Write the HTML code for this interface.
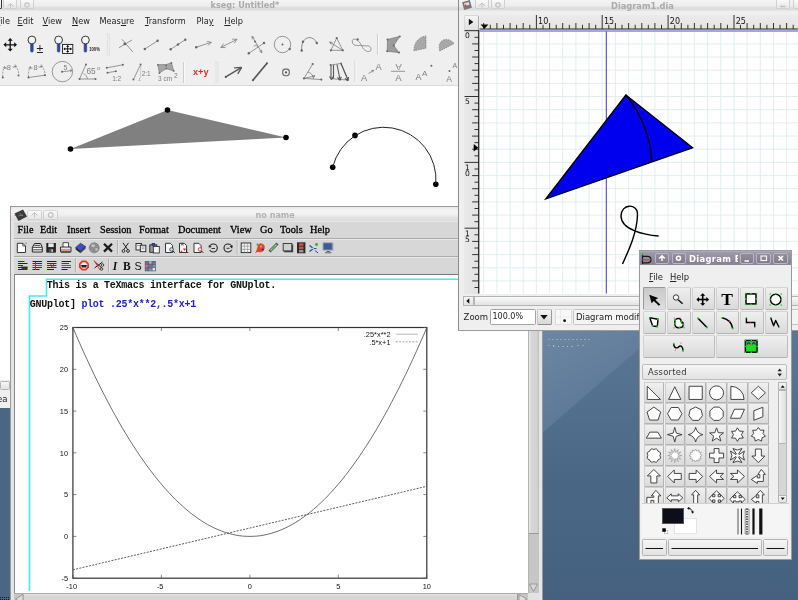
<!DOCTYPE html><html><head><meta charset="utf-8"><title>desktop</title><style>
html,body{margin:0;padding:0;}
body{width:798px;height:600px;overflow:hidden;position:relative;background:#5a7494;font-family:"DejaVu Sans","Liberation Sans",sans-serif;font-size:8.2px;color:#222;}
div,span,svg{position:absolute;box-sizing:border-box;}
.win{background:#efefef;overflow:hidden;will-change:transform;}
.tbar{left:0;right:0;top:0;height:12px;background:linear-gradient(#f4f4f4,#ededed 50%,#dfdfdf 62%,#dcdcdc 80%,#efefef 96%);}
.ttl{font-weight:bold;font-size:8.6px;color:#aaa;white-space:nowrap;line-height:10px;}
.wb{top:0;height:9px;width:14px;border:1px solid #d0d0d0;border-top:none;border-radius:0 0 2px 2px;background:linear-gradient(#fafafa,#e6e6e6);}
.mi{white-space:nowrap;line-height:10px;}
.mi u{text-decoration:underline;text-underline-offset:1px;text-decoration-thickness:0.8px;}
.tm{font-family:"Liberation Serif","DejaVu Serif",serif;}
.mono{font-family:"Liberation Mono","DejaVu Sans Mono",monospace;font-weight:bold;white-space:pre;}
.btn{background:linear-gradient(#f6f6f6,#e2e2e2);border:1px solid #b4b4b4;border-radius:1.5px;}
.tb{background:linear-gradient(#efefef,#dadada);border-color:#d4d4d4 #bcbcbc #b4b4b4 #d0d0d0;}
</style></head><body>
<div style="left:0;top:0;width:798px;height:600px;background:linear-gradient(180deg,#5b7795 0,#5b7795 330px,#54708f 400px,#4b6786 480px,#45617f 600px);"></div>
<svg style="left:0;top:0" width="798" height="600"><defs><linearGradient id="dg" x1="0" y1="0" x2="0.6" y2="1"><stop offset="0" stop-color="#6d87a4"/><stop offset="0.55" stop-color="#627d9b"/><stop offset="1" stop-color="#587492"/></linearGradient></defs><polygon points="540,325 666,325 540,435" fill="url(#dg)"/><path d="M548.5 339.5h42" stroke="#cfc3ae" stroke-width="1" stroke-dasharray="1 3"/><path d="M548.5 345.5h6M553.5 346.5h20" stroke="#cfc3ae" stroke-width="1" stroke-dasharray="1 3.5"/><path d="M577.5 345.5h6" stroke="#cfc3ae" stroke-width="1" stroke-dasharray="1 4"/><rect x="0" y="408" width="10" height="192" fill="#4b6685"/><path d="M0 597.5h10M0 599.5h10" stroke="#101820" stroke-width="1" stroke-dasharray="1 1"/></svg>
<div class="win" id="kseg" style="left:0;top:0;width:458px;height:408px;">
<div class="tbar"></div>
<div class="wb" style="left:-12px;border-color:#333;"></div><div class="wb" style="left:3px"></div><div class="wb" style="left:20px"></div>
<svg style="left:0;top:0" width="40" height="12"><path d="M7.5 6.5l3-3l3 3M10.5 3.8v4" stroke="#c4c4c4" fill="none" stroke-width="1"/><circle cx="27" cy="5" r="2.2" stroke="#c4c4c4" fill="none" stroke-width="1.2"/></svg>
<div class="ttl" style="left:210.6px;top:-0.2px;font-size:8.1px">kseg: Untitled*</div>
<div class="mi" style="left:-3.8px;top:16px;"><u>F</u>ile</div>
<div class="mi" style="left:17.5px;top:16px;"><u>E</u>dit</div>
<div class="mi" style="left:42.6px;top:16px;"><u>V</u>iew</div>
<div class="mi" style="left:72px;top:16px;"><u>N</u>ew</div>
<div class="mi" style="left:99.5px;top:16px;">Meas<u>u</u>re</div>
<div class="mi" style="left:144.9px;top:16px;"><u>T</u>ransform</div>
<div class="mi" style="left:196.5px;top:16px;">Pla<u>y</u></div>
<div class="mi" style="left:224.3px;top:16px;"><u>H</u>elp</div>
<div style="left:0;top:86px;width:458px;height:294px;background:#fff;"></div>
<div style="left:0;top:85px;width:458px;height:1px;background:#d9d9d9;"></div>
<div style="left:0;top:380px;width:458px;height:28px;background:#efefef;"></div>
<div class="btn" style="left:0;top:381px;width:10px;height:9px;"></div>
<div class="mi" style="left:-8.5px;top:394px;font-size:8.6px">Rea</div>
<svg id="kcanvas" style="left:0;top:0" width="458" height="408">
<polygon points="70.5,149 167.5,110 286,137.5" fill="#808080"/>
<circle cx="70.5" cy="149" r="2.8" fill="#000"/>
<circle cx="167.5" cy="110" r="2.8" fill="#000"/>
<circle cx="286" cy="137.5" r="2.8" fill="#000"/>
<circle cx="332.7" cy="167.2" r="2.8" fill="#000"/>
<circle cx="355" cy="135.4" r="2.8" fill="#000"/>
<circle cx="435.8" cy="184.2" r="2.8" fill="#000"/>
<path d="M332.7 167.2A52.4 52.4 0 0 1 435.8 184.2" stroke="#222" stroke-width="1" fill="none"/>
<g font-family="Liberation Sans,DejaVu Sans,sans-serif"><path d="M5.4 44.8H15M10.2 40V49.6" stroke="#111" stroke-width="1.3"/><polygon points="17,44.8 14.2,47.3 14.2,42.3" fill="#111"/><polygon points="3.4,44.8 6.2,42.3 6.2,47.3" fill="#111"/><polygon points="10.2,51.6 12.7,48.8 7.7,48.8" fill="#111"/><polygon points="10.2,38 7.7,40.8 12.7,40.8" fill="#111"/><rect x="30.6" y="43.6" width="2.6" height="8.5" fill="#2e3fd6" stroke="#444" stroke-width="0.6" rx="1"/><circle cx="31.9" cy="40" r="3.9" fill="#f4f4f4" stroke="#222" stroke-width="0.9"/><rect x="57.3" y="43.6" width="2.6" height="8.5" fill="#2e3fd6" stroke="#444" stroke-width="0.6" rx="1"/><circle cx="58.6" cy="40" r="3.9" fill="#f4f4f4" stroke="#222" stroke-width="0.9"/><rect x="84.1" y="43.6" width="2.6" height="8.5" fill="#2e3fd6" stroke="#444" stroke-width="0.6" rx="1"/><circle cx="85.4" cy="40" r="3.9" fill="#f4f4f4" stroke="#222" stroke-width="0.9"/><text x="36.6" y="53" font-size="12.5" fill="#222" text-anchor="start" >±</text><rect x="62.6" y="44.4" width="10.2" height="9" fill="#fff" stroke="#111" stroke-width="0.9"/><path d="M67.7 45.6v6.6M64 48.9h7.4" stroke="#111" stroke-width="1"/><path d="M67.7 45l1.7 1.8h-3.4zM67.7 52.8l1.7-1.8h-3.4zM63.4 48.9l1.8-1.7v3.4zM72 48.9l-1.8-1.7v3.4z" fill="#111"/><text x="89.3" y="51.2" font-size="5" fill="#222" text-anchor="start" font-weight="bold" textLength="10.5" lengthAdjust="spacingAndGlyphs">100%</text><path d="M107.3 33V56M109.3 34V56" stroke="#cfcfcf" stroke-width="1" stroke-dasharray="1 1.3" fill="none"/><path d="M119 47.7L132 40" stroke="#7d7d7d" stroke-width="0.8" fill="none" /><path d="M122 39.3L133 52.2" stroke="#7d7d7d" stroke-width="0.8" fill="none" /><circle cx="124.8" cy="43.9" r="1.4" fill="#666"/><path d="M144.8 49L157.6 40.8" stroke="#7d7d7d" stroke-width="0.8" fill="none" /><circle cx="144.8" cy="49" r="1.2" fill="#666"/><circle cx="157.6" cy="40.8" r="1.2" fill="#666"/><path d="M170.7 49.3L185.3 39.7" stroke="#7d7d7d" stroke-width="0.8" fill="none" /><circle cx="170.7" cy="49.3" r="1.2" fill="#666"/><circle cx="185.3" cy="39.7" r="1.2" fill="#666"/><circle cx="178" cy="44.5" r="1.2" fill="#666"/><path d="M196.2 47.2L211.3 42.3" stroke="#7d7d7d" stroke-width="0.8" fill="none" /><circle cx="196.2" cy="47.2" r="1.2" fill="#666"/><path d="M211.3 42.3L206.87 41.52" stroke="#7d7d7d" stroke-width="0.8" fill="none" /><path d="M211.3 42.3L208.17 45.54" stroke="#7d7d7d" stroke-width="0.8" fill="none" /><path d="M220.8 47.5L237 39.3" stroke="#7d7d7d" stroke-width="0.8" fill="none" /><path d="M237 39.3L232.2 39.2" stroke="#7d7d7d" stroke-width="0.8" fill="none" /><path d="M237 39.3L234.24 43.22" stroke="#7d7d7d" stroke-width="0.8" fill="none" /><path d="M220.8 47.5L225.6 47.6" stroke="#7d7d7d" stroke-width="0.8" fill="none" /><path d="M220.8 47.5L223.56 43.58" stroke="#7d7d7d" stroke-width="0.8" fill="none" /><path d="M248.8 53.3L264 43" stroke="#7d7d7d" stroke-width="0.8" fill="none" /><circle cx="248.8" cy="53.3" r="1.2" fill="#666"/><circle cx="264" cy="43" r="1.2" fill="#666"/><path d="M252 36.3L261.9 52.8" stroke="#7d7d7d" stroke-width="0.8" fill="none" /><path d="M261.9 52.8L261.59 49.82" stroke="#7d7d7d" stroke-width="0.8" fill="none" /><path d="M261.9 52.8L259.41 51.12" stroke="#7d7d7d" stroke-width="0.8" fill="none" /><path d="M252 36.3L252.31 39.28" stroke="#7d7d7d" stroke-width="0.8" fill="none" /><path d="M252 36.3L254.49 37.98" stroke="#7d7d7d" stroke-width="0.8" fill="none" /><circle cx="255" cy="41.5" r="1" fill="#666"/><path d="M253.7 46.5l2.6-1.7l1.7 2.6" stroke="#7d7d7d" stroke-width="0.7" fill="none"/><circle cx="282.5" cy="44.5" r="8.2" stroke="#7d7d7d" stroke-width="0.8" fill="none"/><circle cx="282.5" cy="44.5" r="1" fill="#666"/><circle cx="289.7" cy="49" r="1.2" fill="#666"/><path d="M301.7 50.5C300.5 36 313 34 316.8 43" stroke="#7d7d7d" stroke-width="0.9" fill="none"/><circle cx="301.7" cy="50.5" r="1.2" fill="#666"/><circle cx="316.8" cy="43" r="1.2" fill="#666"/><circle cx="303" cy="41.8" r="1.2" fill="#666"/><path d="M330.9 50.3L336.7 38" stroke="#7d7d7d" stroke-width="0.8" fill="none" /><path d="M330.9 50.3L342.8 50.3" stroke="#7d7d7d" stroke-width="0.8" fill="none" /><path d="M336.7 38L342.8 50.3" stroke="#7d7d7d" stroke-width="0.8" fill="none" /><path d="M342.8 50.3L329.6 42" stroke="#7d7d7d" stroke-width="0.8" fill="none" /><path d="M329.6 42L331.23 44.52" stroke="#7d7d7d" stroke-width="0.8" fill="none" /><path d="M329.6 42L332.58 42.37" stroke="#7d7d7d" stroke-width="0.8" fill="none" /><circle cx="330.9" cy="50.3" r="1.1" fill="#666"/><circle cx="336.7" cy="38" r="1.1" fill="#666"/><circle cx="342.8" cy="50.3" r="1.1" fill="#666"/><path d="M361.5 45.5C358 38 351.5 37.5 352.3 42C353 47 359.5 45 361.5 45.5C366.5 46.5 370 44.5 371 48.5C371.8 53 364.5 53 361.5 45.5z" stroke="#7d7d7d" stroke-width="0.8" fill="none"/><circle cx="357.7" cy="39.4" r="1.1" fill="#666"/><path d="M377.5 34V55" stroke="#cdcdcd" stroke-width="1" fill="none"/><path d="M378.5 34V55" stroke="#fafafa" stroke-width="1" fill="none"/><polygon points="387.5,39.4 399.8,36.4 393.7,45.5 399,52.6 387.2,51.3" fill="#9c9c9c" stroke="#777" stroke-width="0.7"/><circle cx="387.5" cy="39.4" r="1" fill="#666"/><circle cx="399.8" cy="36.4" r="1" fill="#666"/><circle cx="393.7" cy="45.5" r="1" fill="#666"/><circle cx="399" cy="52.6" r="1" fill="#666"/><circle cx="387.2" cy="51.3" r="1" fill="#666"/><path d="M413.9 50.8C414 42 419 37 426 35.9V48.2z" fill="#a8a8a8" stroke="#777" stroke-width="0.7" stroke-dasharray="1.5 1"/><path d="M439.8 51C436.5 40 447 35.5 454.2 43.5z" fill="#a8a8a8" stroke="#777" stroke-width="0.7" stroke-dasharray="1.5 1"/><path d="M2.8 77Q2 70 5 67" stroke="#7d7d7d" stroke-width="0.8" fill="none" stroke-dasharray="2 1.2"/><path d="M15 66Q19 69 18.5 75.5" stroke="#7d7d7d" stroke-width="0.8" fill="none" stroke-dasharray="2 1.2"/><circle cx="2.8" cy="77.5" r="1" fill="#666"/><circle cx="18.5" cy="75.5" r="1" fill="#666"/><path d="M5 66.5L2.99 67.98" stroke="#7d7d7d" stroke-width="0.8" fill="none" /><path d="M5 66.5L4.84 69" stroke="#7d7d7d" stroke-width="0.8" fill="none" /><path d="M16.5 66.5L15.03 64.48" stroke="#7d7d7d" stroke-width="0.8" fill="none" /><path d="M16.5 66.5L14.01 66.32" stroke="#7d7d7d" stroke-width="0.8" fill="none" /><text x="8.8" y="70" font-size="7.5" fill="#7d7d7d" text-anchor="middle" >8</text><path d="M4.5 68L7 68" stroke="#7d7d7d" stroke-width="0.8" fill="none" /><path d="M12.5 67L16 67" stroke="#7d7d7d" stroke-width="0.8" fill="none" /><path d="M28.5 77.5L45 75.2" stroke="#7d7d7d" stroke-width="0.8"/><path d="M28.5 77Q28 70 30.5 67" stroke="#7d7d7d" stroke-width="0.8" fill="none" stroke-dasharray="2 1.2"/><path d="M41 66Q45 69 45 75" stroke="#7d7d7d" stroke-width="0.8" fill="none" stroke-dasharray="2 1.2"/><circle cx="28.5" cy="77.5" r="1" fill="#666"/><circle cx="45" cy="75.2" r="1" fill="#666"/><path d="M30.5 66.5L28.49 67.98" stroke="#7d7d7d" stroke-width="0.8" fill="none" /><path d="M30.5 66.5L30.34 69" stroke="#7d7d7d" stroke-width="0.8" fill="none" /><path d="M42.5 66.5L41.03 64.48" stroke="#7d7d7d" stroke-width="0.8" fill="none" /><path d="M42.5 66.5L40.01 66.32" stroke="#7d7d7d" stroke-width="0.8" fill="none" /><text x="35.5" y="70" font-size="7.5" fill="#7d7d7d" text-anchor="middle" >8</text><path d="M30 68L32.5 68" stroke="#7d7d7d" stroke-width="0.8" fill="none" /><path d="M38.5 67L42 67" stroke="#7d7d7d" stroke-width="0.8" fill="none" /><circle cx="62.4" cy="71.6" r="10.2" stroke="#7d7d7d" stroke-width="0.8" fill="none"/><path d="M62 71.8L72 70.5" stroke="#7d7d7d" stroke-width="0.8" fill="none" /><circle cx="62" cy="71.8" r="1" fill="#666"/><path d="M72.3 70.5L69.92 69.74" stroke="#7d7d7d" stroke-width="0.8" fill="none" /><path d="M72.3 70.5L70.18 71.83" stroke="#7d7d7d" stroke-width="0.8" fill="none" /><text x="65.5" y="70" font-size="7" fill="#7d7d7d" text-anchor="middle" >5</text><path d="M79.5 79L86 64.5" stroke="#7d7d7d" stroke-width="0.8" fill="none" /><path d="M79.5 79L95.5 79" stroke="#7d7d7d" stroke-width="0.8" fill="none" /><circle cx="79.5" cy="79" r="1" fill="#666"/><circle cx="86" cy="64.5" r="1" fill="#666"/><circle cx="95.5" cy="79" r="1" fill="#666"/><path d="M83.5 73.5Q87 75 87.5 79" stroke="#7d7d7d" stroke-width="0.7" fill="none"/><text x="86.5" y="74.3" font-size="8.3" fill="#7d7d7d" text-anchor="start" >65</text><text x="97" y="70" font-size="5.5" fill="#7d7d7d" text-anchor="start" >o</text><path d="M106.8 67.8L122.9 64.8" stroke="#7d7d7d" stroke-width="0.8" fill="none" /><circle cx="106.8" cy="67.8" r="1" fill="#666"/><circle cx="122.9" cy="64.8" r="1" fill="#666"/><path d="M107.5 72.7L115.8 71.3" stroke="#7d7d7d" stroke-width="0.8" fill="none" /><circle cx="107.5" cy="72.7" r="1" fill="#666"/><circle cx="115.8" cy="71.3" r="1" fill="#666"/><text x="112.2" y="81" font-size="6.5" fill="#7d7d7d" text-anchor="start" >1:2</text><path d="M133.4 79.6L140.6 64.5" stroke="#7d7d7d" stroke-width="0.8" fill="none" /><circle cx="133.4" cy="79.6" r="1" fill="#666"/><circle cx="140.6" cy="64.5" r="1" fill="#666"/><path d="M140.6 64.5V78" stroke="#7d7d7d" stroke-width="0.6" stroke-dasharray="1 1"/><text x="141.7" y="76" font-size="6.5" fill="#7d7d7d" text-anchor="start" >2:1</text><text x="137.5" y="81" font-size="4" fill="#7d7d7d" text-anchor="start" >.1</text><polygon points="157.9,64.8 166.2,64.5 171.4,62.9 173.7,70.9 166.2,68.6 159.4,73.1" fill="#a6a6a6" stroke="#777" stroke-width="0.7"/><circle cx="157.9" cy="64.8" r="0.9" fill="#666"/><circle cx="166.2" cy="65.6" r="0.9" fill="#666"/><circle cx="171.4" cy="62.9" r="0.9" fill="#666"/><circle cx="173.7" cy="70.9" r="0.9" fill="#666"/><circle cx="166.2" cy="68.6" r="0.9" fill="#666"/><circle cx="159.4" cy="73.1" r="0.9" fill="#666"/><text x="158" y="81" font-size="6.5" fill="#7d7d7d" text-anchor="start" >3 cm</text><text x="174" y="77.5" font-size="6.5" fill="#7d7d7d" text-anchor="start" >2</text><path d="M183.5 62V83" stroke="#cdcdcd" stroke-width="1" fill="none"/><path d="M184.5 62V83" stroke="#fafafa" stroke-width="1" fill="none"/><text x="193" y="75" font-size="9.5" fill="#e0301c" text-anchor="start" font-weight="bold" textLength="15.6" lengthAdjust="spacingAndGlyphs">x+y</text><path d="M216 61V83M218 62V83" stroke="#cfcfcf" stroke-width="1" stroke-dasharray="1 1.3" fill="none"/><path d="M225.8 76.9L241.6 67.4" stroke="#555" stroke-width="1.3" fill="none" /><path d="M241.6 67.4L234.11 67.79" stroke="#555" stroke-width="1.3" fill="none" /><path d="M241.6 67.4L237.74 73.83" stroke="#555" stroke-width="1.3" fill="none" /><circle cx="225.8" cy="76.9" r="1.1" fill="#555"/><path d="M252.9 80.3L267 63.3" stroke="#555" stroke-width="1.7" fill="none" /><circle cx="252.9" cy="80.3" r="1" fill="#555"/><circle cx="267" cy="63.3" r="1" fill="#555"/><rect x="282.7" y="69.1" width="6.6" height="6.6" rx="2.6" stroke="#666" stroke-width="1.1" fill="none"/><circle cx="286" cy="72.4" r="1.1" fill="#555"/><path d="M304 78.4L312.7 64" stroke="#7d7d7d" stroke-width="0.8" fill="none" /><path d="M304 78.4L321.3 79.6" stroke="#7d7d7d" stroke-width="0.8" fill="none" /><circle cx="304" cy="78.4" r="1.1" fill="#666"/><circle cx="312.7" cy="64" r="1.1" fill="#666"/><circle cx="321.3" cy="79.6" r="1.1" fill="#666"/><path d="M308 72Q313 73.5 313.5 79" stroke="#7d7d7d" stroke-width="0.8" fill="none"/><path d="M304 78.4L315 76" stroke="#7d7d7d" stroke-width="0.8" fill="none" /><path d="M315 76L312.56 75.45" stroke="#7d7d7d" stroke-width="0.8" fill="none" /><path d="M315 76L313.01 77.52" stroke="#7d7d7d" stroke-width="0.8" fill="none" /><path d="M330.5 65L341 63.5L348 80L340 79.5L331 78.5" stroke="#7d7d7d" stroke-width="0.8" fill="none"/><path d="M331 65L331 78.5" stroke="#555" stroke-width="1.1" fill="none" /><path d="M333.5 65L333.5 78.5" stroke="#555" stroke-width="1.1" fill="none" /><path d="M337 64.5L340 79.5" stroke="#555" stroke-width="1.1" fill="none" /><path d="M341 63.5L348 80" stroke="#555" stroke-width="1.1" fill="none" /><path d="M331.5 79.8L333.29 76.45" stroke="#555" stroke-width="1.1" fill="none" /><path d="M331.5 79.8L329.49 76.58" stroke="#555" stroke-width="1.1" fill="none" /><path d="M340 80.3L341.25 76.71" stroke="#555" stroke-width="1.1" fill="none" /><path d="M340 80.3L337.52 77.42" stroke="#555" stroke-width="1.1" fill="none" /><path d="M348 80.8L348.53 77.04" stroke="#555" stroke-width="1.1" fill="none" /><path d="M348 80.8L345 78.46" stroke="#555" stroke-width="1.1" fill="none" /><circle cx="330.5" cy="65" r="0.9" fill="#666"/><circle cx="341" cy="63.5" r="0.9" fill="#666"/><path d="M355 61V82" stroke="#cdcdcd" stroke-width="1" fill="none"/><path d="M356 61V82" stroke="#fafafa" stroke-width="1" fill="none"/><text x="361" y="80.8" font-size="9.3" fill="#7d7d7d" text-anchor="start" >A</text><text x="375.5" y="70.2" font-size="9.3" fill="#7d7d7d" text-anchor="start" >A</text><path d="M368.5 73.5L373.5 70.5" stroke="#7d7d7d" stroke-width="0.8" fill="none" /><path d="M373.8 70.3L371.31 70.57" stroke="#7d7d7d" stroke-width="0.8" fill="none" /><path d="M373.8 70.3L372.41 72.38" stroke="#7d7d7d" stroke-width="0.8" fill="none" /><text x="0" y="0" font-size="9.5" fill="#7d7d7d" transform="translate(401.8 63.5) rotate(180)">A</text><path d="M391 71.3L405 71.3" stroke="#7d7d7d" stroke-width="0.8" fill="none" /><text x="395.3" y="80.8" font-size="9.5" fill="#7d7d7d" text-anchor="start" >A</text><text x="415.5" y="79.8" font-size="9" fill="#7d7d7d" text-anchor="start" >A</text><text x="422" y="76" font-size="8" fill="#7d7d7d" text-anchor="start" >A</text><circle cx="431.4" cy="65.7" r="1" fill="#666"/><circle cx="449.5" cy="71" r="1" fill="#666"/><text x="446.3" y="82.3" font-size="8.5" fill="#7d7d7d" text-anchor="start" >A</text><text x="452.5" y="68" font-size="7" fill="#7d7d7d" text-anchor="start" >A</text></g>
</svg>
</div>
<div class="win" id="tmw" style="left:10px;top:206px;width:532.5px;height:394px;background:#d4d4d4;border:1px solid #999;border-bottom:none;">
<div class="tbar" style="height:14px;background:linear-gradient(#e9e9e9,#f3f3f3 25%,#f0f0f0 55%,#e2e2e2 75%,#dcdcdc);"></div>
<div class="wb" style="left:15.7px;top:2.5px;border-top:1px solid #d8d8d8;height:10.5px;width:15.3px;border-radius:2px"></div><div class="wb" style="left:32.3px;top:2.5px;border-top:1px solid #d8d8d8;height:10.5px;width:14.7px;border-radius:2px"></div>
<svg style="left:0;top:0" width="60" height="16"><path d="M3.5 6.5l8.5-4l4 7l-8.5 4.5z" fill="#3a3a3a"/><path d="M8 6l4 3M7 9l5-1" stroke="#999" stroke-width="0.6"/><circle cx="4.3" cy="8.3" r="0.8" fill="#e33"/><path d="M20.5 8.5l3-3l3 3M23.5 6v4.5" stroke="#c0c0c0" fill="none" stroke-width="1"/><circle cx="39.7" cy="8" r="2.3" stroke="#c0c0c0" fill="none" stroke-width="1.2"/></svg>
<div class="ttl" style="left:244.5px;top:3px;color:#b2b2b2;font-size:8.1px">no name</div>
<div style="left:0;top:14px;width:531px;height:17.5px;background:#d7d7d7;border-top:1px solid #e6e6e6;border-bottom:1px solid #ababab;"></div>
<div class="mi tm" style="left:6.5px;top:17.1px;font-size:10.3px;line-height:11px;color:#000;-webkit-text-stroke:0.3px #000;">File</div>
<div class="mi tm" style="left:29px;top:17.1px;font-size:10.3px;line-height:11px;color:#000;-webkit-text-stroke:0.3px #000;">Edit</div>
<div class="mi tm" style="left:56px;top:17.1px;font-size:10.3px;line-height:11px;color:#000;-webkit-text-stroke:0.3px #000;">Insert</div>
<div class="mi tm" style="left:89px;top:17.1px;font-size:10.3px;line-height:11px;color:#000;-webkit-text-stroke:0.3px #000;">Session</div>
<div class="mi tm" style="left:128px;top:17.1px;font-size:10.3px;line-height:11px;color:#000;-webkit-text-stroke:0.3px #000;">Format</div>
<div class="mi tm" style="left:167px;top:17.1px;font-size:10.3px;line-height:11px;color:#000;-webkit-text-stroke:0.3px #000;">Document</div>
<div class="mi tm" style="left:219px;top:17.1px;font-size:10.3px;line-height:11px;color:#000;-webkit-text-stroke:0.3px #000;">View</div>
<div class="mi tm" style="left:249px;top:17.1px;font-size:10.3px;line-height:11px;color:#000;-webkit-text-stroke:0.3px #000;">Go</div>
<div class="mi tm" style="left:269px;top:17.1px;font-size:10.3px;line-height:11px;color:#000;-webkit-text-stroke:0.3px #000;">Tools</div>
<div class="mi tm" style="left:299px;top:17.1px;font-size:10.3px;line-height:11px;color:#000;-webkit-text-stroke:0.3px #000;">Help</div>
<div style="left:0;top:31.5px;width:531px;height:18px;background:#d7d7d7;border-top:1px solid #e8e8e8;border-bottom:1px solid #ababab;"></div>
<div style="left:0;top:49.5px;width:531px;height:18px;background:#d7d7d7;border-top:1px solid #e8e8e8;border-bottom:1px solid #777;"></div>
<svg id="tmicons" style="left:0;top:0" width="531" height="70"><g transform="translate(-11 -207)"><path d="M17.3 243.3h5.5l2.7 2.7v6.5h-8.2z" fill="#fff" stroke="#222" stroke-width="0.9" /><path d="M22.8 243.3v2.7h2.7" fill="none" stroke="#222" stroke-width="0.7" /><path d="M25.5 242l1 1.5M27 243.5h-2" fill="none" stroke="#777" stroke-width="0.5" /><path d="M32.3 247.3l2.3-3.8h6l1.7 3.8v4.7h-10z" fill="#fafafa" stroke="#222" stroke-width="1" /><path d="M32.5 247.3h9.5M34.3 245.3h6" fill="none" stroke="#222" stroke-width="0.9" /><path d="M32.5 249.8h9.5" fill="none" stroke="#333" stroke-width="0.9" /><rect x="46.3" y="243" width="9.6" height="9.6" fill="#222" /><rect x="48.3" y="243.3" width="5.4" height="3.8" fill="#e8e8e8" /><rect x="48.8" y="248.8" width="4.6" height="3.5" fill="#555" /><rect x="51.5" y="249.3" width="1.3" height="2.5" fill="#ddd" /><path d="M63 247v-4.3h5.5v4.3" fill="#fff" stroke="#222" stroke-width="0.8" /><path d="M60.5 247h10.5v4.8h-10.5z" fill="#e4e4e4" stroke="#222" stroke-width="0.9" /><path d="M61 250h9.5" fill="none" stroke="#c33" stroke-width="0.9" /><path d="M61 252.3h9.5" fill="none" stroke="#333" stroke-width="0.9" /><path d="M75.6 247.5l5-4.3l4.8 3.3l-5 4.5z" fill="#3a4fd0" stroke="#223" stroke-width="0.6" /><path d="M75.6 247.5l4.8 3.5v2l-4.8-3.5z" fill="#222" /><path d="M80.4 251l5-4.5v2l-5 4.5z" fill="#445" stroke="#223" stroke-width="0.4" /><circle cx="94.2" cy="247.8" r="5" fill="#8e8e8e" stroke="#707070" stroke-width="0.6"/><path d="M91 245.5q2-2 4-0.5q0 2-2 2.5zM95.5 248q2-0.5 2.5 1.5q-1.5 2-2.5 1zM90.5 249q1.5 0.5 1.5 2.5" fill="#c4c4c4" /><path d="M104 243.8l8 7.8M112 243.8l-8 7.8" fill="none" stroke="#1a1a1a" stroke-width="2.3" /><path d="M117.5 240v14.5" fill="none" stroke="#9a9a9a" stroke-width="0.8" /><path d="M118.3 240v14.5" fill="none" stroke="#eee" stroke-width="0.8" /><path d="M123 242.8l4.8 7M128.5 242.8l-4.8 7" fill="none" stroke="#222" stroke-width="1" /><circle cx="123.5" cy="251" r="1.4" fill="none" stroke="#222" stroke-width="0.9"/><circle cx="128" cy="251" r="1.4" fill="none" stroke="#222" stroke-width="0.9"/><rect x="136" y="243.5" width="5.5" height="6.5" fill="#eee" stroke="#222" stroke-width="0.9" /><rect x="140.3" y="245.2" width="5.5" height="6.5" fill="#f4f4f4" stroke="#222" stroke-width="0.9" /><path d="M141.5 247h3M141.5 248.8h3M137 245.5h2.5" fill="none" stroke="#666" stroke-width="0.6" /><rect x="149.8" y="244.8" width="7" height="7.5" fill="#999" stroke="#222" stroke-width="0.9" /><rect x="152" y="243.3" width="2.8" height="2" fill="#2a3acc" stroke="#223" stroke-width="0.5" /><rect x="153.3" y="246.5" width="6" height="6.5" fill="#f4f4f4" stroke="#222" stroke-width="0.8" /><path d="M165.5 243.3h4.8l2.3 2.3v6.9h-7.1z" fill="#f6f6f6" stroke="#222" stroke-width="0.9" /><circle cx="171.5" cy="249.5" r="1.8" fill="#dde" stroke="#235" stroke-width="0.8"/><path d="M172.8 250.8l2 2" fill="none" stroke="#222" stroke-width="1" /><path d="M179.5 243.3h4.8l2.3 2.3v6.9h-7.1z" fill="#f6f6f6" stroke="#222" stroke-width="0.9" /><path d="M181.3 245.5l1-2.2l1 2.2" fill="none" stroke="#222" stroke-width="0.7" /><path d="M183 248.5l1.5 2.5l1.5-2.5z" fill="#d22" /><path d="M186.5 249v3.5h1.8" fill="none" stroke="#222" stroke-width="0.8" /><circle cx="181.5" cy="251.3" r="0.8" fill="#d22"/><path d="M194 243.3h4.8l2.3 2.3v6.9h-7.1z" fill="#f6f6f6" stroke="#222" stroke-width="0.9" /><circle cx="200" cy="249.5" r="1.8" fill="#fdd" stroke="#c33" stroke-width="0.8"/><path d="M201.3 250.8l2 2" fill="none" stroke="#222" stroke-width="1" /><circle cx="213.3" cy="248" r="4" fill="none" stroke="#222" stroke-width="1.1"/><path d="M208.3 245.5l3.3 0.5l-2 2.5z" fill="#222" /><path d="M211.5 248.5h3.5" fill="none" stroke="#222" stroke-width="0.9" /><rect x="208.5" y="247.5" width="1.8" height="2.5" fill="#d6d6d6" /><circle cx="228" cy="248" r="4" fill="none" stroke="#222" stroke-width="1.1"/><rect x="230.5" y="247.3" width="2.3" height="2.5" fill="#d6d6d6" /><path d="M233 245.5l-3.3 0.5l2 2.5z" fill="#222" /><path d="M226.5 248.3h3" fill="none" stroke="#222" stroke-width="0.9" /><path d="M237.2 240v14.5" fill="none" stroke="#9a9a9a" stroke-width="0.8" /><path d="M238 240v14.5" fill="none" stroke="#eee" stroke-width="0.8" /><rect x="241.2" y="243" width="9.6" height="9.6" fill="#f2f2f2" stroke="#222" stroke-width="0.9" /><path d="M241.2 246.2h9.6M241.2 249.4h9.6M244.4 243v9.6M247.6 243v9.6" fill="none" stroke="#888" stroke-width="0.6" /><path d="M256 252l2-7q2-3 5-1q3 2 1 6q-2 3-5 2z" fill="#e0442c" /><circle cx="262.8" cy="249.5" r="1.1" fill="#22c"/><circle cx="257.5" cy="244.5" r="1" fill="#2a2"/><path d="M255.5 253l4-5" fill="none" stroke="#e0442c" stroke-width="1" /><circle cx="261" cy="246.5" r="0.9" fill="#fa8"/><path d="M269.5 251.5l8-8" fill="none" stroke="#555" stroke-width="3" /><path d="M270.5 250.5l6-6" fill="none" stroke="#bbb" stroke-width="1.2" /><path d="M272.5 248.8l2.2-2.2" fill="none" stroke="#3c3" stroke-width="1.6" /><rect x="284.2" y="244.5" width="9" height="7.8" fill="#444" /><rect x="283.2" y="243.5" width="8.6" height="7.4" fill="#cfcfcf" stroke="#333" stroke-width="0.9" /><rect x="297" y="242.3" width="8.4" height="11" fill="#2a2a2a" /><rect x="299" y="243.3" width="4.4" height="2.5" fill="#c54" /><rect x="299" y="246.6" width="4.4" height="2.5" fill="#c54" /><rect x="299" y="249.9" width="4.4" height="2.5" fill="#999" /><path d="M309.5 245.5l4 3l-4 3M313.5 248.5h3" fill="none" stroke="#2a4a9a" stroke-width="1.2" /><circle cx="316.5" cy="244.5" r="1.4" fill="#3a3"/><path d="M315 250.5l3 2.5" fill="none" stroke="#2a4a9a" stroke-width="1" /><circle cx="313" cy="248.3" r="0.9" fill="#ddd"/><rect x="323" y="242.8" width="9.3" height="7.3" fill="#3a5a9a" stroke="#aaa" stroke-width="0.9" /><path d="M325 252.8h6.5M326.5 251.5h3.5" fill="none" stroke="#666" stroke-width="1" /><path d="M332.8 243v7.5" fill="none" stroke="#888" stroke-width="0.8" /><path d="M18 261.5h6.5" fill="none" stroke="#22d" stroke-width="1" /><path d="M18 263.5h9.5" fill="none" stroke="#222" stroke-width="1" /><path d="M18 265.5h5" fill="none" stroke="#22d" stroke-width="1" /><path d="M18 267.5h9.5" fill="none" stroke="#222" stroke-width="1" /><path d="M18 269.5h7" fill="none" stroke="#222" stroke-width="1" /><path d="M21 266.5h6.5v3.5h-5.5z" fill="#333" /><path d="M32.5 261.5h9.5" fill="none" stroke="#222" stroke-width="1" /><path d="M32.5 263.5h9.5" fill="none" stroke="#22d" stroke-width="1" /><path d="M32.5 265.5h9.5" fill="none" stroke="#d22" stroke-width="1" /><path d="M32.5 267.5h9.5" fill="none" stroke="#22d" stroke-width="1" /><path d="M32.5 269.5h7" fill="none" stroke="#222" stroke-width="1" /><path d="M35.5 262v8" fill="none" stroke="#d22" stroke-width="1" /><path d="M47 261.5h9.5" fill="none" stroke="#222" stroke-width="1" /><path d="M47 263.5h9.5" fill="none" stroke="#22d" stroke-width="1" /><path d="M47 265.5h9.5" fill="none" stroke="#22d" stroke-width="1" /><path d="M47 267.5h9.5" fill="none" stroke="#22d" stroke-width="1" /><path d="M47 269.5h7" fill="none" stroke="#222" stroke-width="1" /><path d="M50.5 264l3.5 3.5M54 264l-3.5 3.5" fill="none" stroke="#d22" stroke-width="0.9" /><path d="M61.5 261.5h9.5" fill="none" stroke="#222" stroke-width="1" /><path d="M61.5 263.5h7.5" fill="none" stroke="#444" stroke-width="1" /><path d="M61.5 265.5h9.5" fill="none" stroke="#55a" stroke-width="1" /><path d="M61.5 267.5h9.5" fill="none" stroke="#444" stroke-width="1" /><path d="M61.5 269.5h6" fill="none" stroke="#222" stroke-width="1" /><path d="M75.7 258.5v14" fill="none" stroke="#9a9a9a" stroke-width="0.8" /><path d="M76.5 258.5v14" fill="none" stroke="#eee" stroke-width="0.8" /><polygon points="88.99,267.57 86.07,270.49 81.93,270.49 79.01,267.57 79.01,263.43 81.93,260.51 86.07,260.51 88.99,263.43" fill="#e03a24"/><polygon points="87.14,266.8 85.3,268.64 82.7,268.64 80.86,266.8 80.86,264.2 82.7,262.36 85.3,262.36 87.14,264.2" fill="#f0f0f0"/><path d="M81 265h6l-1 2.5h-4z" fill="#222" /><path d="M94.5 261.5l7.5 6.5M102.5 262l-8 6" fill="none" stroke="#222" stroke-width="1" /><circle cx="101.5" cy="269" r="1.3" fill="none" stroke="#222" stroke-width="0.8"/><circle cx="102.5" cy="265" r="1.3" fill="none" stroke="#222" stroke-width="0.8"/><path d="M94 260.5l6 9.5" fill="none" stroke="#e22" stroke-width="0.9" /><path d="M108.5 258.5v14" fill="none" stroke="#9a9a9a" stroke-width="0.8" /><path d="M109.3 258.5v14" fill="none" stroke="#eee" stroke-width="0.8" /><text x="112.8" y="270" font-family="Liberation Serif,DejaVu Serif,serif" font-style="italic" font-weight="bold" font-size="11.5" fill="#111">I</text><text x="123" y="270" font-family="Liberation Serif,DejaVu Serif,serif" font-weight="bold" font-size="11.5" fill="#111">B</text><text x="134.6" y="270" font-family="Liberation Sans,DejaVu Sans,sans-serif" font-size="10.8" fill="#111">S</text><rect x="144.8" y="261" width="11" height="10.3" fill="#56647e" /><rect x="145.6" y="261.8" width="2.6" height="2.4" fill="#6d7b97" /><rect x="145.6" y="265.1" width="2.6" height="2.4" fill="#8794ad" /><rect x="145.6" y="268.4" width="2.6" height="2.4" fill="#6d7b97" /><rect x="149.1" y="261.8" width="2.6" height="2.4" fill="#8794ad" /><rect x="149.1" y="265.1" width="2.6" height="2.4" fill="#6d7b97" /><rect x="149.1" y="268.4" width="2.6" height="2.4" fill="#8794ad" /><rect x="152.6" y="261.8" width="2.6" height="2.4" fill="#6d7b97" /><rect x="152.6" y="265.1" width="2.6" height="2.4" fill="#8794ad" /><rect x="152.6" y="268.4" width="2.6" height="2.4" fill="#6d7b97" /><rect x="145.3" y="263" width="2.2" height="1.6" fill="#e33" /><rect x="147" y="266.5" width="1.6" height="2" fill="#e33" /><rect x="149" y="261.5" width="2.5" height="1.2" fill="#ccd" /><rect x="152.5" y="268" width="2.5" height="2.5" fill="#dde" /></g></svg>
<div style="left:0;top:15px;width:3px;height:380px;background:#e4e4e4;"></div>
<div style="left:4px;top:67.5px;width:513px;height:321.5px;background:#fff;"></div>
<div style="left:2.5px;top:67px;width:1.5px;height:330px;background:#8a8a8a;"></div>
<svg style="left:0;top:0" width="531" height="394"><path d="M531 72.2H35.5V89H18.5V384" stroke="#3cf0f0" stroke-width="1.6" fill="none"/></svg>
<div class="mono" style="left:35.8px;top:72.5px;font-size:10px;letter-spacing:-0.27px;line-height:11px;color:#111;">This is a TeXmacs interface for GNUplot.</div>
<div class="mono" style="left:18.8px;top:92.3px;font-size:10px;letter-spacing:-0.27px;line-height:11px;color:#111;">GNUplot] <span style="position:static;color:#2222cc">plot .25*x**2,.5*x+1</span></div>
<svg id="plot" style="left:0;top:0;font-family:'Liberation Sans','DejaVu Sans',sans-serif;font-size:7.4px" width="531" height="394">
<rect x="61.9" y="120.5" width="353.9" height="250.7" fill="none" stroke="#333" stroke-width="1.2"/>
<path d="M61.9 371.2h3.5M415.8 371.2h-3.5" stroke="#555" stroke-width="0.7"/>
<text x="57.1" y="373.9" text-anchor="end" fill="#111">-5</text>
<path d="M61.9 329.4h3.5M415.8 329.4h-3.5" stroke="#555" stroke-width="0.7"/>
<text x="57.1" y="332.1" text-anchor="end" fill="#111">0</text>
<path d="M61.9 287.6h3.5M415.8 287.6h-3.5" stroke="#555" stroke-width="0.7"/>
<text x="57.1" y="290.3" text-anchor="end" fill="#111">5</text>
<path d="M61.9 245.8h3.5M415.8 245.8h-3.5" stroke="#555" stroke-width="0.7"/>
<text x="57.1" y="248.5" text-anchor="end" fill="#111">10</text>
<path d="M61.9 204.1h3.5M415.8 204.1h-3.5" stroke="#555" stroke-width="0.7"/>
<text x="57.1" y="206.8" text-anchor="end" fill="#111">15</text>
<path d="M61.9 162.3h3.5M415.8 162.3h-3.5" stroke="#555" stroke-width="0.7"/>
<text x="57.1" y="165" text-anchor="end" fill="#111">20</text>
<path d="M61.9 120.5h3.5M415.8 120.5h-3.5" stroke="#555" stroke-width="0.7"/>
<text x="57.1" y="123.2" text-anchor="end" fill="#111">25</text>
<path d="M61.9 371.2v-3.5M61.9 120.5v3.5" stroke="#555" stroke-width="0.7"/>
<text x="60.7" y="381.5" text-anchor="middle" fill="#111">-10</text>
<path d="M150.4 371.2v-3.5M150.4 120.5v3.5" stroke="#555" stroke-width="0.7"/>
<text x="149.2" y="381.5" text-anchor="middle" fill="#111">-5</text>
<path d="M238.9 371.2v-3.5M238.9 120.5v3.5" stroke="#555" stroke-width="0.7"/>
<text x="238.9" y="381.5" text-anchor="middle" fill="#111">0</text>
<path d="M327.3 371.2v-3.5M327.3 120.5v3.5" stroke="#555" stroke-width="0.7"/>
<text x="327.3" y="381.5" text-anchor="middle" fill="#111">5</text>
<path d="M415.8 371.2v-3.5M415.8 120.5v3.5" stroke="#555" stroke-width="0.7"/>
<text x="415.8" y="381.5" text-anchor="middle" fill="#111">10</text>
<polyline points="61.9,120.5 65.4,128.8 69,136.9 72.5,144.8 76.1,152.6 79.6,160.2 83.1,167.6 86.7,174.9 90.2,182 93.8,188.9 97.3,195.7 100.8,202.3 104.4,208.7 107.9,215 111.4,221.1 115,227 118.5,232.8 122.1,238.4 125.6,243.8 129.1,249.1 132.7,254.2 136.2,259.1 139.8,263.9 143.3,268.5 146.8,272.9 150.4,277.2 153.9,281.3 157.5,285.2 161,289 164.5,292.6 168.1,296 171.6,299.2 175.1,302.3 178.7,305.3 182.2,308 185.8,310.6 189.3,313 192.8,315.3 196.4,317.4 199.9,319.3 203.5,321.1 207,322.6 210.5,324.1 214.1,325.3 217.6,326.4 221.2,327.3 224.7,328.1 228.2,328.7 231.8,329.1 235.3,329.3 238.9,329.4 242.4,329.3 245.9,329.1 249.5,328.7 253,328.1 256.5,327.3 260.1,326.4 263.6,325.3 267.2,324.1 270.7,322.6 274.2,321.1 277.8,319.3 281.3,317.4 284.9,315.3 288.4,313 291.9,310.6 295.5,308 299,305.3 302.6,302.3 306.1,299.2 309.6,296 313.2,292.6 316.7,289 320.2,285.2 323.8,281.3 327.3,277.2 330.9,272.9 334.4,268.5 337.9,263.9 341.5,259.1 345,254.2 348.6,249.1 352.1,243.8 355.6,238.4 359.2,232.8 362.7,227 366.3,221.1 369.8,215 373.3,208.7 376.9,202.3 380.4,195.7 383.9,188.9 387.5,182 391,174.9 394.6,167.6 398.1,160.2 401.6,152.6 405.2,144.8 408.7,136.9 412.3,128.8 415.8,120.5" fill="none" stroke="#4a4a4a" stroke-width="0.8"/>
<path d="M61.9 362.8L415.8 279.3" stroke="#4a4a4a" stroke-width="0.9" stroke-dasharray="2 1.3" fill="none"/>
<text x="379.5" y="130" text-anchor="end" fill="#111">.25*x**2</text><path d="M384.8 127.2h22" stroke="#999" stroke-width="0.7"/>
<text x="379.5" y="137.7" text-anchor="end" fill="#111">.5*x+1</text><path d="M384.8 134.8h22" stroke="#999" stroke-width="0.9" stroke-dasharray="2 1.3"/>
</svg>
<div style="left:517px;top:67.5px;width:11px;height:319px;background:#c6c6c6;border-left:1px solid #b4b4b4;"></div>
<div style="left:517.5px;top:67.5px;width:10px;height:259px;background:linear-gradient(90deg,#e9e9e9,#d6d6d6 25%,#d2d2d2 80%,#bcbcbc);border-bottom:1px solid #999;"></div>
<div style="left:528px;top:15px;width:4px;height:380px;background:#e6e6e6;"></div>
<div style="left:3px;top:385.5px;width:525px;height:9px;background:#c6c6c6;border-top:1px solid #aaa;"></div>
<div style="left:13px;top:386.5px;width:494px;height:8px;background:linear-gradient(#e6e6e6,#d6d6d6 30%);border-right:1px solid #999"></div>
<div style="left:517px;top:385.5px;width:11px;height:9px;background:#e2e2e2;"></div>
<svg style="left:0;top:0" width="531" height="394"><path d="M518.5 377l4 7.5l4-7.5z" fill="#d8d8d8" stroke="#8c8c8c" stroke-width="0.8"/><path d="M4.5 392l7.5-4.5v9z" fill="#ddd" stroke="#8c8c8c" stroke-width="0.8"/><path d="M508 387.5l8 4.5l-8 4.5z" fill="#ddd" stroke="#8c8c8c" stroke-width="0.8"/></svg>
</div>
<div class="win" id="dia" style="left:458px;top:0;width:340px;height:330.5px;border-left:1px solid #8c8c8c;border-bottom:1px solid #9a9a9a;">
<div class="tbar"></div>
<div class="wb" style="left:16px"></div><div class="wb" style="left:32px"></div><div class="wb" style="left:316.7px;width:14.5px"></div><div class="wb" style="left:334px;width:22px"></div>
<svg style="left:0;top:0" width="340" height="13"><rect x="4" y="1" width="8" height="8" fill="#777" transform="rotate(-15 8 5)"/><rect x="5.5" y="2.5" width="5" height="3" fill="#ddd" transform="rotate(-15 8 5)"/><circle cx="6.5" cy="5.5" r="1" fill="#d33"/><path d="M20 6l3-3l3 3M23 3.5v4" stroke="#c0c0c0" fill="none"/><circle cx="39" cy="5" r="2.2" stroke="#c0c0c0" fill="none" stroke-width="1.2"/><path d="M321 6.5h5.5" stroke="#c0c0c0" stroke-width="1.5"/></svg>
<div class="ttl" style="left:152px;top:0.5px;font-size:8.3px">Diagram1.dia</div>
<div class="btn" style="left:4.5px;top:14.5px;width:15px;height:16px;border-color:#d8d8d8 #a8a8a8 #a0a0a0 #d8d8d8;background:linear-gradient(#f4f4f4,#e0e0e0)"></div>
<div style="left:20.5px;top:31.5px;width:320px;height:262px;background:#fff;"></div>
<div style="left:20.5px;top:14.5px;width:320px;height:15px;background:linear-gradient(#ebebeb,#e4e4e4);"></div><div style="left:5px;top:31px;width:15px;height:262.5px;background:linear-gradient(90deg,#e9e9e9,#e2e2e2);"></div>
<svg id="diacanvas" style="left:0;top:0;font-size:8px" width="340" height="330">
<path d="M9.8 18.8v6.4l4.6-3.2z" fill="#111"/>
<path d="M24.7 31.5V293.5M37.9 31.5V293.5M51.1 31.5V293.5M64.2 31.5V293.5M77.4 31.5V293.5M90.6 31.5V293.5M103.7 31.5V293.5M116.9 31.5V293.5M130.1 31.5V293.5M143.2 31.5V293.5M156.4 31.5V293.5M169.6 31.5V293.5M182.8 31.5V293.5M195.9 31.5V293.5M209.1 31.5V293.5M222.3 31.5V293.5M235.4 31.5V293.5M248.6 31.5V293.5M261.8 31.5V293.5M275 31.5V293.5M288.1 31.5V293.5M301.3 31.5V293.5M314.5 31.5V293.5M327.6 31.5V293.5M20.5 43.9H340M20.5 57H340M20.5 70.2H340M20.5 83.4H340M20.5 96.5H340M20.5 109.7H340M20.5 122.9H340M20.5 136.1H340M20.5 149.2H340M20.5 162.4H340M20.5 175.6H340M20.5 188.7H340M20.5 201.9H340M20.5 215.1H340M20.5 228.2H340M20.5 241.4H340M20.5 254.6H340M20.5 267.8H340M20.5 280.9H340" stroke="#dfecec" stroke-width="0.9" fill="none"/>
<path d="M24.7 23V29M31.3 24.8V29M37.9 23V29M44.5 24.8V29M51.1 23V29M57.6 24.8V29M64.2 23V29M70.8 24.8V29M77.4 15V29M84 24.8V29M90.6 23V29M97.2 24.8V29M103.7 23V29M110.3 24.8V29M116.9 23V29M123.5 24.8V29M130.1 23V29M136.7 24.8V29M143.2 15V29M149.8 24.8V29M156.4 23V29M163 24.8V29M169.6 23V29M176.2 24.8V29M182.8 23V29M189.3 24.8V29M195.9 23V29M202.5 24.8V29M209.1 15V29M215.7 24.8V29M222.3 23V29M228.9 24.8V29M235.4 23V29M242 24.8V29M248.6 23V29M255.2 24.8V29M261.8 23V29M268.4 24.8V29M275 15V29M281.5 24.8V29M288.1 23V29M294.7 24.8V29M301.3 23V29M307.9 24.8V29M314.5 23V29M321 24.8V29M327.6 23V29M334.2 24.8V29M5.5 30.7H20M15.5 37.3H20M13.2 43.9H20M15.5 50.5H20M13.2 57H20M15.5 63.6H20M13.2 70.2H20M15.5 76.8H20M13.2 83.4H20M15.5 90H20M5.5 96.5H20M15.5 103.1H20M13.2 109.7H20M15.5 116.3H20M13.2 122.9H20M15.5 129.5H20M13.2 136.1H20M15.5 142.6H20M13.2 149.2H20M15.5 155.8H20M5.5 162.4H20M15.5 169H20M13.2 175.6H20M15.5 182.2H20M13.2 188.7H20M15.5 195.3H20M13.2 201.9H20M15.5 208.5H20M13.2 215.1H20M15.5 221.7H20M5.5 228.2H20M15.5 234.8H20M13.2 241.4H20M15.5 248H20M13.2 254.6H20M15.5 261.2H20M13.2 267.8H20M15.5 274.3H20M13.2 280.9H20M15.5 287.5H20" stroke="#333" stroke-width="1" fill="none"/>
<path d="M20.5 29H340M19.7 30V293.5" stroke="#222" stroke-width="1.2" fill="none"/>
<text x="79.1" y="23.8" fill="#111">10</text>
<text x="144.9" y="23.8" fill="#111">15</text>
<text x="210.8" y="23.8" fill="#111">20</text>
<text x="276.7" y="23.8" fill="#111">25</text>
<path d="M21.6 24.4h7.8l-3.9 4.3z" fill="#000"/>
<path d="M14.7 144v7.4l4.6-3.7z" fill="#000"/>
<text x="6" y="37.6" fill="#111" font-size="7.6">0</text><text x="6" y="103.7" fill="#111" font-size="7.6">5</text>
<text x="6" y="169.5" fill="#111" font-size="7.6">1</text><text x="6" y="175.5" fill="#111" font-size="7.6">0</text>
<text x="6" y="235.5" fill="#111" font-size="7.6">1</text><text x="6" y="241.5" fill="#111" font-size="7.6">5</text>
<path d="M20.5 31H340" stroke="#5a5ae0" stroke-width="1"/>
<path d="M147.3 31.5V293.5" stroke="#3a3acc" stroke-width="1"/>
<polygon points="166.9,95 233.7,147.7 86.7,199" fill="#0000ee" stroke="#000" stroke-width="1.3"/>
<path d="M166.9 95Q192 127 192.5 162" stroke="#000" stroke-width="1.4" fill="none"/>
<path d="M199.6 236C186 235 162 230 162 216C162 203.5 178.5 203 178.5 214C178.5 232 169 252 163.5 264" stroke="#000" stroke-width="1.4" fill="none"/>
</svg>
<div style="left:4px;top:296px;width:336px;height:10px;background:#dcdcdc;border:1px solid #b0b0b0;"></div>
<div class="btn" style="left:4px;top:296px;width:10.5px;height:10px;"></div>
<div class="btn" style="left:14.5px;top:296px;width:326px;height:10px;background:linear-gradient(#fafafa,#e2e2e2)"></div>
<div class="mi" style="left:4.6px;top:312px;font-size:8.5px;">Zoom</div>
<div style="left:30.5px;top:309px;width:46.3px;height:15.8px;background:#fff;border:1px solid #a4a4a4;border-radius:1.5px"></div>
<div class="mi" style="left:33.5px;top:312px;font-size:8px;">100.0%</div>
<div class="btn" style="left:77.8px;top:308.6px;width:14.8px;height:16.8px;border-color:#c8c8c8 #999 #8c8c8c #c8c8c8;background:linear-gradient(#f4f4f4,#d8d8d8)"></div>
<div style="left:96px;top:309px;width:16.5px;height:16px;background:#f8f8f8;border:1px solid #dcdcdc;"></div>
<div style="left:114px;top:309px;width:230px;height:16px;background:#f4f4f4;border:1px solid #c4c4c4;border-radius:1.5px"></div>
<div class="mi" style="left:117px;top:312px;font-size:8.5px;">Diagram modified</div>
<svg style="left:0;top:0" width="120" height="331"><path d="M10.3 298.3l-3 2.7l3 2.7z" fill="#111"/><path d="M81.3 315h7.4l-3.7 4.4z" fill="#111"/><circle cx="105.6" cy="320.7" r="1.4" fill="#111"/><path d="M101.5 310v14M97 317h14.5" stroke="#e8e8e8" stroke-width="0.8"/></svg>
</div>
<div class="win" id="tbx" style="left:639px;top:250px;width:153px;height:310px;border:1px solid #9a9a9a;background:#efefef;">
<div class="tbar" style="height:14px;background:linear-gradient(#b4b1bd,#9c98a8 12%,#928e9f 55%,#878394 75%,#8c8899);"></div>
<div style="left:15.3px;top:2px;width:13.3px;height:10.5px;border:1px solid #b9b6c3;border-radius:2px;background:linear-gradient(#918d9d,#807c8c);"></div>
<div style="left:31.5px;top:2px;width:14px;height:10.5px;border:1px solid #b9b6c3;border-radius:2px;background:linear-gradient(#918d9d,#807c8c);"></div>
<div style="left:99.5px;top:2px;width:14px;height:10.5px;border:1px solid #b9b6c3;border-radius:2px;background:linear-gradient(#918d9d,#807c8c);"></div>
<div style="left:116.4px;top:2px;width:14.5px;height:10.5px;border:1px solid #b9b6c3;border-radius:2px;background:linear-gradient(#918d9d,#807c8c);"></div>
<div style="left:133px;top:2px;width:15.3px;height:10.5px;border:1px solid #b9b6c3;border-radius:2px;background:linear-gradient(#918d9d,#807c8c);"></div>
<svg style="left:0;top:0" width="153" height="16"><path d="M2.5 3.5v9.5M2.5 5.3h5q3.5 0 3.5 3.3q0 3.3-3.5 3.3h-5" stroke="#1a1a1a" stroke-width="1.2" fill="none"/><path d="M1.5 8.8h10.5" stroke="#d33" stroke-width="0.9"/><circle cx="2.6" cy="3.3" r="1" fill="#2c2"/><path d="M19.2 7.5l2.8-2.8l2.8 2.8M22 5.5v4.5" stroke="#fff" fill="none" stroke-width="1.5"/><circle cx="38.5" cy="7.3" r="2" stroke="#fff" fill="none" stroke-width="1.5"/><path d="M104.5 10h4.5" stroke="#fff" stroke-width="1.5"/><rect x="121" y="5" width="5.5" height="4.5" fill="none" stroke="#f4f4f4" stroke-width="1.2"/><path d="M138.5 5l4.5 4.5M143 5l-4.5 4.5" stroke="#fff" stroke-width="1.6"/></svg>
<div class="ttl" style="left:49px;top:2.5px;color:#fff;font-size:8.4px;width:49px;overflow:hidden;letter-spacing:0.35px">Diagram Editor</div>
<div style="left:0;top:0.5px;width:153px;height:309px;">
<div class="mi" style="left:9px;top:20.5px;font-size:8.4px;"><u>F</u>ile</div><div class="mi" style="left:30px;top:20.5px;font-size:8.4px;"><u>H</u>elp</div>
<div class="btn tb" style="left:2.7px;top:35.8px;width:23.5px;height:22.8px;background:linear-gradient(#c9c9c9,#dedede);border-color:#9a9a9a #c8c8c8 #d0d0d0 #9a9a9a;"></div>
<div class="btn tb" style="left:27.1px;top:35.8px;width:23.5px;height:22.8px;"></div>
<div class="btn tb" style="left:51.5px;top:35.8px;width:23.5px;height:22.8px;"></div>
<div class="btn tb" style="left:75.9px;top:35.8px;width:23.5px;height:22.8px;"></div>
<div class="btn tb" style="left:100.3px;top:35.8px;width:23.5px;height:22.8px;"></div>
<div class="btn tb" style="left:124.7px;top:35.8px;width:23.5px;height:22.8px;"></div>
<div class="btn tb" style="left:2.7px;top:59.6px;width:23.5px;height:22.8px;"></div>
<div class="btn tb" style="left:27.1px;top:59.6px;width:23.5px;height:22.8px;"></div>
<div class="btn tb" style="left:51.5px;top:59.6px;width:23.5px;height:22.8px;"></div>
<div class="btn tb" style="left:75.9px;top:59.6px;width:23.5px;height:22.8px;"></div>
<div class="btn tb" style="left:100.3px;top:59.6px;width:23.5px;height:22.8px;"></div>
<div class="btn tb" style="left:124.7px;top:59.6px;width:23.5px;height:22.8px;"></div>
<div class="btn tb" style="left:2.7px;top:83.5px;width:72.3px;height:22.5px;"></div><div class="btn tb" style="left:76px;top:83.5px;width:71.5px;height:22.5px;"></div>
<svg id="tbicons" style="left:0;top:0" width="153" height="110"><path d="M9.3 42.8L18.2 46.1L15.3 47.7L20.3 52.5L18.8 53.8L13.8 49.1L11.6 51.3z" fill="#000"/><circle cx="36" cy="45.5" r="2.7" fill="#fff" stroke="#222" stroke-width="0.9"/><path d="M38.2 47.8L42.6 51.7" stroke="#111" stroke-width="1.5"/><path d="M57.9 47.5L67.5 47.5" stroke="#000" stroke-width="1.6"/><path d="M62.7 42.7L62.7 52.3" stroke="#000" stroke-width="1.6"/><path d="M69 47.5L66.4 50.1L66.4 44.9z" fill="#000"/><path d="M56.4 47.5L59 44.9L59 50.1z" fill="#000"/><path d="M62.7 53.8L65.3 51.2L60.1 51.2z" fill="#000"/><path d="M62.7 41.2L60.1 43.8L65.3 43.8z" fill="#000"/><text x="87.2" y="53.1" text-anchor="middle" font-family="Liberation Serif,DejaVu Serif,serif" font-weight="bold" font-size="17.5" fill="#000">T</text><rect x="106" y="41.9" width="10" height="10" fill="#fff" stroke="#000" stroke-width="1.5"/><circle cx="105.6" cy="41.5" r="0.85" fill="#1fd01f"/><circle cx="105.6" cy="46.9" r="0.85" fill="#1fd01f"/><circle cx="105.6" cy="52.3" r="0.85" fill="#1fd01f"/><circle cx="111" cy="41.5" r="0.85" fill="#1fd01f"/><circle cx="111" cy="52.3" r="0.85" fill="#1fd01f"/><circle cx="116.4" cy="41.5" r="0.85" fill="#1fd01f"/><circle cx="116.4" cy="46.9" r="0.85" fill="#1fd01f"/><circle cx="116.4" cy="52.3" r="0.85" fill="#1fd01f"/><circle cx="135.7" cy="47.5" r="5.3" fill="#fff" stroke="#000" stroke-width="1.4"/><circle cx="130.2" cy="42" r="0.8" fill="#1fd01f"/><circle cx="130.2" cy="47.5" r="0.8" fill="#1fd01f"/><circle cx="130.2" cy="53" r="0.8" fill="#1fd01f"/><circle cx="135.7" cy="42" r="0.8" fill="#1fd01f"/><circle cx="135.7" cy="53" r="0.8" fill="#1fd01f"/><circle cx="141.2" cy="42" r="0.8" fill="#1fd01f"/><circle cx="141.2" cy="47.5" r="0.8" fill="#1fd01f"/><circle cx="141.2" cy="53" r="0.8" fill="#1fd01f"/><path d="M9.7 65.8L18 67.2L17.3 74.5L12.7 74z" fill="#fff" stroke="#000" stroke-width="1.4" stroke-linejoin="round"/><circle cx="9.7" cy="65.8" r="0.9" fill="#1fd01f"/><circle cx="18" cy="67.2" r="0.9" fill="#1fd01f"/><circle cx="17.3" cy="74.5" r="0.9" fill="#1fd01f"/><circle cx="12.7" cy="74" r="0.9" fill="#1fd01f"/><path d="M35 68C37.5 65.5 41.5 66.5 41 69.5C44.5 70.5 44 76 39.5 75.5C35.5 76.5 34 73.5 35 68z" fill="#fff" stroke="#000" stroke-width="1.4"/><circle cx="35" cy="68" r="0.9" fill="#1fd01f"/><circle cx="41" cy="69.5" r="0.9" fill="#1fd01f"/><circle cx="43.5" cy="72.5" r="0.9" fill="#1fd01f"/><circle cx="39.5" cy="75.5" r="0.9" fill="#1fd01f"/><circle cx="35" cy="71.5" r="0.9" fill="#1fd01f"/><circle cx="34.2" cy="66" r="0.6" fill="#e33"/><circle cx="40" cy="65.8" r="0.6" fill="#e33"/><circle cx="34" cy="75.8" r="0.6" fill="#e33"/><circle cx="44" cy="75.7" r="0.6" fill="#e33"/><circle cx="41.8" cy="71.5" r="0.6" fill="#e33"/><path d="M58 66.2L67 75.5" stroke="#000" stroke-width="1.5"/><circle cx="58" cy="66.2" r="1" fill="#1fd01f"/><circle cx="67" cy="75.5" r="1" fill="#1fd01f"/><path d="M82 65.8Q91 67.5 92.7 76.5" fill="none" stroke="#000" stroke-width="1.5"/><circle cx="82" cy="65.8" r="0.9" fill="#1fd01f"/><circle cx="92.7" cy="76.5" r="0.9" fill="#1fd01f"/><circle cx="89.3" cy="69.3" r="0.7" fill="#e33"/><path d="M106.4 66L106.4 70.5L114.7 70.5L114.7 75" stroke="#000" stroke-width="1.4" fill="none"/><circle cx="106.4" cy="65.8" r="0.7" fill="#1fd01f"/><circle cx="114.7" cy="75.2" r="0.7" fill="#1fd01f"/><circle cx="110.5" cy="70.5" r="0.6" fill="#e33"/><path d="M130.7 65.8L133.6 73.8L135.7 68.5L139 75.2" stroke="#000" stroke-width="1.4" fill="none" stroke-linejoin="round"/><circle cx="130.7" cy="65.8" r="0.7" fill="#1fd01f"/><circle cx="139" cy="75.2" r="0.7" fill="#1fd01f"/><circle cx="133.6" cy="74" r="0.6" fill="#e33"/><path d="M33.7 91.8C33.7 96.8 37.7 96.3 38.7 94.8C40.7 92.8 43 94.8 43 98.8" fill="none" stroke="#000" stroke-width="1.4"/><circle cx="33.7" cy="91.6" r="0.9" fill="#1fd01f"/><circle cx="43" cy="99" r="0.9" fill="#1fd01f"/><circle cx="41" cy="91" r="0.6" fill="#e33"/><circle cx="35.5" cy="98" r="0.6" fill="#e33"/><rect x="104.6" y="87.7" width="13.2" height="13.3" fill="#111"/><rect x="106.1" y="89.2" width="10.2" height="10.3" fill="#22dc22"/><path d="M107.1 92.5q1.6-3.4 3.2 0M112.2 92.5q1.6-3.4 3.2 0" stroke="#2233aa" stroke-width="1.5" fill="none"/><rect x="110.2" y="91.9" width="2" height="1" fill="#d55"/><rect x="104.7" y="87.8" width="1.3" height="1.3" fill="#22dc22"/><rect x="104.7" y="93.75" width="1.3" height="1.3" fill="#22dc22"/><rect x="104.7" y="99.7" width="1.3" height="1.3" fill="#22dc22"/><rect x="110.6" y="87.8" width="1.3" height="1.3" fill="#22dc22"/><rect x="110.6" y="99.7" width="1.3" height="1.3" fill="#22dc22"/><rect x="116.5" y="87.8" width="1.3" height="1.3" fill="#22dc22"/><rect x="116.5" y="93.75" width="1.3" height="1.3" fill="#22dc22"/><rect x="116.5" y="99.7" width="1.3" height="1.3" fill="#22dc22"/></svg>
<div class="btn" style="left:2.4px;top:112.1px;width:145px;height:16.4px;border-radius:2px;border-color:#bdbdbd"></div>
<div class="mi" style="left:8px;top:115.5px;font-size:8.4px;letter-spacing:0.25px;color:#333">Assorted</div>
<svg style="left:0;top:0" width="153" height="135"><path d="M137.5 119.3l2.2-2.8l2.2 2.8zM137.5 121.6l2.2 2.8l2.2-2.8z" fill="#222"/></svg>
<div style="left:3px;top:130.5px;width:146px;height:120.5px;overflow:hidden;">
<div class="btn" style="left:0.6px;top:0.4px;width:20.5px;height:20.5px;border-color:#cfcfcf #b4b4b4 #b4b4b4 #cfcfcf;border-radius:1px;background:linear-gradient(#f0f0f0,#dadada)"></div>
<div class="btn" style="left:21.5px;top:0.4px;width:20.5px;height:20.5px;border-color:#cfcfcf #b4b4b4 #b4b4b4 #cfcfcf;border-radius:1px;background:linear-gradient(#f0f0f0,#dadada)"></div>
<div class="btn" style="left:42.4px;top:0.4px;width:20.5px;height:20.5px;border-color:#cfcfcf #b4b4b4 #b4b4b4 #cfcfcf;border-radius:1px;background:linear-gradient(#f0f0f0,#dadada)"></div>
<div class="btn" style="left:63.3px;top:0.4px;width:20.5px;height:20.5px;border-color:#cfcfcf #b4b4b4 #b4b4b4 #cfcfcf;border-radius:1px;background:linear-gradient(#f0f0f0,#dadada)"></div>
<div class="btn" style="left:84.2px;top:0.4px;width:20.5px;height:20.5px;border-color:#cfcfcf #b4b4b4 #b4b4b4 #cfcfcf;border-radius:1px;background:linear-gradient(#f0f0f0,#dadada)"></div>
<div class="btn" style="left:105.1px;top:0.4px;width:20.5px;height:20.5px;border-color:#cfcfcf #b4b4b4 #b4b4b4 #cfcfcf;border-radius:1px;background:linear-gradient(#f0f0f0,#dadada)"></div>
<div class="btn" style="left:0.6px;top:21.3px;width:20.5px;height:20.5px;border-color:#cfcfcf #b4b4b4 #b4b4b4 #cfcfcf;border-radius:1px;background:linear-gradient(#f0f0f0,#dadada)"></div>
<div class="btn" style="left:21.5px;top:21.3px;width:20.5px;height:20.5px;border-color:#cfcfcf #b4b4b4 #b4b4b4 #cfcfcf;border-radius:1px;background:linear-gradient(#f0f0f0,#dadada)"></div>
<div class="btn" style="left:42.4px;top:21.3px;width:20.5px;height:20.5px;border-color:#cfcfcf #b4b4b4 #b4b4b4 #cfcfcf;border-radius:1px;background:linear-gradient(#f0f0f0,#dadada)"></div>
<div class="btn" style="left:63.3px;top:21.3px;width:20.5px;height:20.5px;border-color:#cfcfcf #b4b4b4 #b4b4b4 #cfcfcf;border-radius:1px;background:linear-gradient(#f0f0f0,#dadada)"></div>
<div class="btn" style="left:84.2px;top:21.3px;width:20.5px;height:20.5px;border-color:#cfcfcf #b4b4b4 #b4b4b4 #cfcfcf;border-radius:1px;background:linear-gradient(#f0f0f0,#dadada)"></div>
<div class="btn" style="left:105.1px;top:21.3px;width:20.5px;height:20.5px;border-color:#cfcfcf #b4b4b4 #b4b4b4 #cfcfcf;border-radius:1px;background:linear-gradient(#f0f0f0,#dadada)"></div>
<div class="btn" style="left:0.6px;top:42.2px;width:20.5px;height:20.5px;border-color:#cfcfcf #b4b4b4 #b4b4b4 #cfcfcf;border-radius:1px;background:linear-gradient(#f0f0f0,#dadada)"></div>
<div class="btn" style="left:21.5px;top:42.2px;width:20.5px;height:20.5px;border-color:#cfcfcf #b4b4b4 #b4b4b4 #cfcfcf;border-radius:1px;background:linear-gradient(#f0f0f0,#dadada)"></div>
<div class="btn" style="left:42.4px;top:42.2px;width:20.5px;height:20.5px;border-color:#cfcfcf #b4b4b4 #b4b4b4 #cfcfcf;border-radius:1px;background:linear-gradient(#f0f0f0,#dadada)"></div>
<div class="btn" style="left:63.3px;top:42.2px;width:20.5px;height:20.5px;border-color:#cfcfcf #b4b4b4 #b4b4b4 #cfcfcf;border-radius:1px;background:linear-gradient(#f0f0f0,#dadada)"></div>
<div class="btn" style="left:84.2px;top:42.2px;width:20.5px;height:20.5px;border-color:#cfcfcf #b4b4b4 #b4b4b4 #cfcfcf;border-radius:1px;background:linear-gradient(#f0f0f0,#dadada)"></div>
<div class="btn" style="left:105.1px;top:42.2px;width:20.5px;height:20.5px;border-color:#cfcfcf #b4b4b4 #b4b4b4 #cfcfcf;border-radius:1px;background:linear-gradient(#f0f0f0,#dadada)"></div>
<div class="btn" style="left:0.6px;top:63.1px;width:20.5px;height:20.5px;border-color:#cfcfcf #b4b4b4 #b4b4b4 #cfcfcf;border-radius:1px;background:linear-gradient(#f0f0f0,#dadada)"></div>
<div class="btn" style="left:21.5px;top:63.1px;width:20.5px;height:20.5px;border-color:#cfcfcf #b4b4b4 #b4b4b4 #cfcfcf;border-radius:1px;background:linear-gradient(#f0f0f0,#dadada)"></div>
<div class="btn" style="left:42.4px;top:63.1px;width:20.5px;height:20.5px;border-color:#cfcfcf #b4b4b4 #b4b4b4 #cfcfcf;border-radius:1px;background:linear-gradient(#f0f0f0,#dadada)"></div>
<div class="btn" style="left:63.3px;top:63.1px;width:20.5px;height:20.5px;border-color:#cfcfcf #b4b4b4 #b4b4b4 #cfcfcf;border-radius:1px;background:linear-gradient(#f0f0f0,#dadada)"></div>
<div class="btn" style="left:84.2px;top:63.1px;width:20.5px;height:20.5px;border-color:#cfcfcf #b4b4b4 #b4b4b4 #cfcfcf;border-radius:1px;background:linear-gradient(#f0f0f0,#dadada)"></div>
<div class="btn" style="left:105.1px;top:63.1px;width:20.5px;height:20.5px;border-color:#cfcfcf #b4b4b4 #b4b4b4 #cfcfcf;border-radius:1px;background:linear-gradient(#f0f0f0,#dadada)"></div>
<div class="btn" style="left:0.6px;top:84px;width:20.5px;height:20.5px;border-color:#cfcfcf #b4b4b4 #b4b4b4 #cfcfcf;border-radius:1px;background:linear-gradient(#f0f0f0,#dadada)"></div>
<div class="btn" style="left:21.5px;top:84px;width:20.5px;height:20.5px;border-color:#cfcfcf #b4b4b4 #b4b4b4 #cfcfcf;border-radius:1px;background:linear-gradient(#f0f0f0,#dadada)"></div>
<div class="btn" style="left:42.4px;top:84px;width:20.5px;height:20.5px;border-color:#cfcfcf #b4b4b4 #b4b4b4 #cfcfcf;border-radius:1px;background:linear-gradient(#f0f0f0,#dadada)"></div>
<div class="btn" style="left:63.3px;top:84px;width:20.5px;height:20.5px;border-color:#cfcfcf #b4b4b4 #b4b4b4 #cfcfcf;border-radius:1px;background:linear-gradient(#f0f0f0,#dadada)"></div>
<div class="btn" style="left:84.2px;top:84px;width:20.5px;height:20.5px;border-color:#cfcfcf #b4b4b4 #b4b4b4 #cfcfcf;border-radius:1px;background:linear-gradient(#f0f0f0,#dadada)"></div>
<div class="btn" style="left:105.1px;top:84px;width:20.5px;height:20.5px;border-color:#cfcfcf #b4b4b4 #b4b4b4 #cfcfcf;border-radius:1px;background:linear-gradient(#f0f0f0,#dadada)"></div>
<div class="btn" style="left:0.6px;top:104.9px;width:20.5px;height:20.5px;border-color:#cfcfcf #b4b4b4 #b4b4b4 #cfcfcf;border-radius:1px;background:linear-gradient(#f0f0f0,#dadada)"></div>
<div class="btn" style="left:21.5px;top:104.9px;width:20.5px;height:20.5px;border-color:#cfcfcf #b4b4b4 #b4b4b4 #cfcfcf;border-radius:1px;background:linear-gradient(#f0f0f0,#dadada)"></div>
<div class="btn" style="left:42.4px;top:104.9px;width:20.5px;height:20.5px;border-color:#cfcfcf #b4b4b4 #b4b4b4 #cfcfcf;border-radius:1px;background:linear-gradient(#f0f0f0,#dadada)"></div>
<div class="btn" style="left:63.3px;top:104.9px;width:20.5px;height:20.5px;border-color:#cfcfcf #b4b4b4 #b4b4b4 #cfcfcf;border-radius:1px;background:linear-gradient(#f0f0f0,#dadada)"></div>
<div class="btn" style="left:84.2px;top:104.9px;width:20.5px;height:20.5px;border-color:#cfcfcf #b4b4b4 #b4b4b4 #cfcfcf;border-radius:1px;background:linear-gradient(#f0f0f0,#dadada)"></div>
<div class="btn" style="left:105.1px;top:104.9px;width:20.5px;height:20.5px;border-color:#cfcfcf #b4b4b4 #b4b4b4 #cfcfcf;border-radius:1px;background:linear-gradient(#f0f0f0,#dadada)"></div>
<svg id="shapes" style="left:0;top:0" width="146" height="135"><g fill="#fff" stroke="#333" stroke-width="0.9" stroke-linejoin="miter"><polygon points="4.25,4.25 17.45,17.45 4.25,17.45"/><polygon points="31.75,4.75 37.85,17.45 25.65,17.45"/><polygon points="46.05,4.25 59.25,4.25 59.25,17.45 46.05,17.45"/><circle cx="73.55" cy="10.85" r="7"/><path d="M87.85 4.25A13.2 13.2 0 0 1 101.05 17.45H87.85z"/><polygon points="115.35,4.25 122.45,10.85 115.35,17.45 108.25,10.85"/><polygon points="10.85,25.05 17.7,30.03 15.08,38.07 6.62,38.07 4,30.03"/><polygon points="38.95,31.75 35.35,37.99 28.15,37.99 24.55,31.75 28.15,25.51 35.35,25.51"/><polygon points="52.65,25.05 58.12,27.69 59.47,33.61 55.69,38.36 49.61,38.36 45.83,33.61 47.18,27.69"/><polygon points="80.2,34.51 76.31,38.4 70.79,38.4 66.9,34.51 66.9,28.99 70.79,25.1 76.31,25.1 80.2,28.99"/><polygon points="91.45,27.25 101.45,27.25 97.45,36.25 87.45,36.25"/><polygon points="110.85,28.75 119.85,25.25 119.85,34.75 110.85,38.25"/><polygon points="6.85,50.15 14.85,50.15 18.35,56.15 3.35,56.15"/><polygon points="31.75,45.35 33.31,51.09 39.05,52.65 33.31,54.21 31.75,59.95 30.19,54.21 24.45,52.65 30.19,51.09"/><path d="M52.65 45.35Q53.85 51.45 59.95 52.65Q53.85 53.85 52.65 59.95Q51.45 53.85 45.35 52.65Q51.45 51.45 52.65 45.35z"/><polygon points="73.55,45.85 75.31,50.72 80.49,50.89 76.4,54.08 77.84,59.06 73.55,56.15 69.26,59.06 70.7,54.08 66.61,50.89 71.79,50.72"/><polygon points="94.45,45.85 96.45,49.19 100.34,49.25 98.45,52.65 100.34,56.05 96.45,56.11 94.45,59.45 92.45,56.11 88.56,56.05 90.45,52.65 88.56,49.25 92.45,49.19"/><polygon points="115.35,45.45 117.43,48.33 120.98,48.16 120.03,51.58 122.37,54.25 119.1,55.64 118.47,59.14 115.35,57.45 112.23,59.14 111.6,55.64 108.33,54.25 110.67,51.58 109.72,48.16 113.27,48.33"/><path d="M10.85 67.55Q14.14 65.6 15.09 69.31Q18.8 70.26 16.85 73.55Q18.8 76.84 15.09 77.79Q14.14 81.5 10.85 79.55Q7.56 81.5 6.61 77.79Q2.9 76.84 4.85 73.55Q2.9 70.26 6.61 69.31Q7.56 65.6 10.85 67.55z"/><polygon points="31.75,66.55 32.58,70.46 35.25,67.49 34.01,71.29 37.81,70.05 34.84,72.72 38.75,73.55 34.84,74.38 37.81,77.05 34.01,75.81 35.25,79.61 32.58,76.64 31.75,80.55 30.92,76.64 28.25,79.61 29.49,75.81 25.69,77.05 28.66,74.38 24.75,73.55 28.66,72.72 25.69,70.05 29.49,71.29 28.25,67.49 30.92,70.46" stroke="#888" stroke-width="0.6"/><polygon points="52.65,67.05 53.84,69.11 55.9,67.92 55.9,70.3 58.28,70.3 57.09,72.36 59.15,73.55 57.09,74.74 58.28,76.8 55.9,76.8 55.9,79.18 53.84,77.99 52.65,80.05 51.46,77.99 49.4,79.18 49.4,76.8 47.02,76.8 48.21,74.74 46.15,73.55 48.21,72.36 47.02,70.3 49.4,70.3 49.4,67.92 51.46,69.11" stroke="#888" stroke-width="0.6"/><polygon points="71.15,66.55 75.95,66.55 75.95,71.15 80.55,71.15 80.55,75.95 75.95,75.95 75.95,80.55 71.15,80.55 71.15,75.95 66.55,75.95 66.55,71.15 71.15,71.15"/><polygon points="93.45,72.05 89.95,66.55 94.45,68.05 98.95,66.55 95.45,72.05 95.95,72.55 101.45,69.05 99.95,73.55 101.45,78.05 95.95,74.55 95.45,75.05 98.95,80.55 94.45,79.05 89.95,80.55 93.45,75.05 92.95,74.55 87.45,78.05 88.95,73.55 87.45,69.05 92.95,72.55"/><polygon points="115.35,80.55 108.85,74.05 112.35,74.05 112.35,67.05 118.35,67.05 118.35,74.05 121.85,74.05"/><polygon points="10.85,87.45 17.35,93.95 13.85,93.95 13.85,100.95 7.85,100.95 7.85,93.95 4.35,93.95"/><polygon points="24.75,94.45 31.25,87.95 31.25,91.45 38.25,91.45 38.25,97.45 31.25,97.45 31.25,100.95"/><polygon points="59.65,94.45 53.15,100.95 53.15,97.45 46.15,97.45 46.15,91.45 53.15,91.45 53.15,87.95"/><polygon points="66.55,94.45 73.55,87.95 73.55,91.45 80.55,91.45 77.05,94.45 80.55,97.45 73.55,97.45 73.55,100.95"/><polygon points="101.45,94.45 94.45,87.95 94.45,91.45 87.45,91.45 90.95,94.45 87.45,97.45 94.45,97.45 94.45,100.95"/><polygon points="118.35,87.45 122.35,92.45 120.35,92.45 120.35,99.45 114.35,99.45 114.35,101.45 108.35,97.45 114.35,93.45 114.35,95.95 116.85,95.95 116.85,92.45 114.85,92.45"/><polygon points="12.85,108.35 17.85,113.85 15.35,113.85 15.35,124.35 10.85,124.35 10.85,118.35 7.85,118.35 7.85,124.35 3.85,124.35 3.85,115.35 10.85,115.35 10.85,113.85 8.35,113.85"/><polygon points="23.75,115.85 28.25,111.85 28.25,113.85 35.25,113.85 35.25,111.85 39.75,115.85 35.25,119.85 35.25,117.85 28.25,117.85 28.25,119.85"/><polygon points="52.65,108.35 56.65,112.85 54.65,112.85 54.65,124.35 50.65,124.35 50.65,112.85 48.65,112.85"/><polygon points="71.95,114.75 71.95,112.35 69.75,112.35 73.55,108.85 77.35,112.35 75.15,112.35 75.15,114.75 75.15,114.75 77.55,114.75 77.55,112.55 81.05,116.35 77.55,120.15 77.55,117.95 75.15,117.95 75.15,117.95 75.15,120.35 77.35,120.35 73.55,123.85 69.75,120.35 71.95,120.35 71.95,117.95 71.95,117.95 69.55,117.95 69.55,120.15 66.05,116.35 69.55,112.55 69.55,114.75 71.95,114.75"/><polygon points="92.85,118.95 90.45,118.95 90.45,121.15 86.95,117.35 90.45,113.55 90.45,115.75 92.85,115.75 92.85,115.75 92.85,113.35 90.65,113.35 94.45,109.85 98.25,113.35 96.05,113.35 96.05,115.75 96.05,115.75 98.45,115.75 98.45,113.55 101.95,117.35 98.45,121.15 98.45,118.95 96.05,118.95 96.05,119.85 92.85,119.85"/><polygon points="117.35,108.35 121.35,112.85 119.35,112.85 119.35,124.35 115.85,124.35 115.85,119.35 113.35,119.35 113.35,121.35 108.35,117.35 113.35,113.35 113.35,115.85 115.85,115.85 115.85,112.85 113.35,112.85"/></g></svg>
<div style="left:134.7px;top:0.4px;width:9.3px;height:120px;background:#d6d6d6;border:1px solid #b8b8b8;"></div>
<div class="btn" style="left:134.7px;top:0.4px;width:9.3px;height:8px;"></div><div class="btn" style="left:134.7px;top:112.5px;width:9.3px;height:8px;"></div>
<div class="btn" style="left:134.7px;top:8.4px;width:9.3px;height:54px;background:linear-gradient(90deg,#f6f6f6,#dedede)"></div>
<svg style="left:134.7px;top:0" width="10" height="122"><path d="M2.7 5.8l2-2.5l2 2.5zM2.7 115.5l2 2.5l2-2.5z" fill="#111"/></svg>
</div>
<div style="left:2px;top:251.5px;width:147px;height:33.5px;background:#f5f5f5;border-top:1px solid #d0d0d0;"></div>
<div style="left:34px;top:266.5px;width:22.7px;height:16px;background:#fff;border:1px solid #e4e4e4;"></div>
<div style="left:22px;top:256.5px;width:21.7px;height:15.8px;background:#0e0e1a;border:1px solid #555;"></div>
<svg style="left:0;top:0" width="153" height="310"><rect x="24.5" y="278.5" width="3.3" height="3.3" fill="#fff" stroke="#999" stroke-width="0.5"/><rect x="22.3" y="276.3" width="3.5" height="3.5" fill="#000"/><path d="M48.3 256.3q3.5 0 4.3 4.3" stroke="#111" fill="none" stroke-width="1"/><path d="M47 256.3l2.3-1.6v3.2zM52.6 261.8l-1.6-2.3h3.2z" fill="#111"/><path d="M98 256.5v26" stroke="#111" stroke-width="0.7"/><path d="M101.5 256.5v26" stroke="#111" stroke-width="1.1"/><path d="M107 256.5v26" stroke="#111" stroke-width="1.3" stroke-dasharray="1.5 1"/><path d="M105.2 257v25M109 257v25" stroke="#444" stroke-width="0.6"/><path d="M105.2 257h1.5M105.2 282h1.5M109 257h-1.5M109 282h-1.5" stroke="#444" stroke-width="0.6"/><path d="M113.5 256.5v26" stroke="#111" stroke-width="2.2"/><path d="M120.8 256.5v26" stroke="#111" stroke-width="3.2"/></svg>
<div class="btn" style="left:2px;top:287px;width:24.5px;height:17.5px;"></div>
<div class="btn" style="left:28px;top:287px;width:93.5px;height:17.5px;"></div>
<div class="btn" style="left:123px;top:287px;width:25px;height:17.5px;"></div>
<svg style="left:0;top:0" width="153" height="310"><path d="M5.5 296.5h17.5M31.5 296.5h86.5M126.5 296.5h18" stroke="#111" stroke-width="1.1"/></svg>
</div>
</div>
</body></html>
